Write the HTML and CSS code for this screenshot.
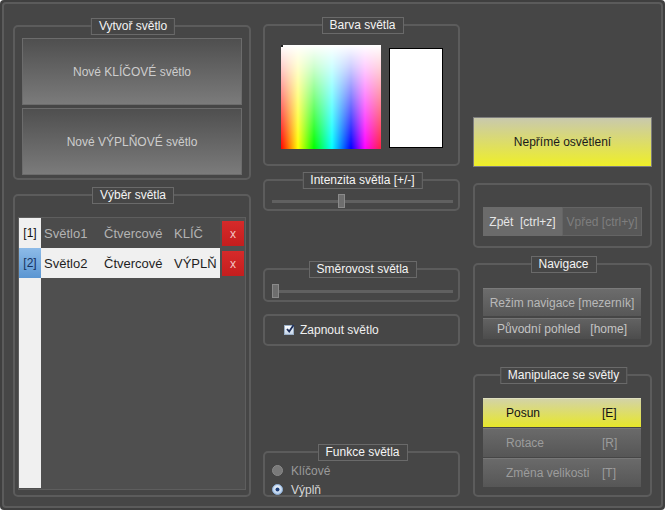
FILE: index.html
```html
<!DOCTYPE html>
<html lang="cs">
<head>
<meta charset="utf-8">
<title>Světla</title>
<link rel="stylesheet" href="styles.css">
</head>
<body>
<div class="window">
  <div class="frame">
    <div class="col col-left">
      <div class="group g-create">
        <div class="title">Vytvoř světlo</div>
        <div class="bigbtn">Nové KLÍČOVÉ světlo</div>
        <div class="bigbtn">Nové VÝPLŇOVÉ světlo</div>
      </div>
      <div class="group g-select">
        <div class="title">Výběr světla</div>
        <div class="table">
          <div class="hcol">
            <div class="hcell">[1]</div>
            <div class="hcell sel">[2]</div>
          </div>
          <div class="tbody">
            <div class="row">
              <div class="cells"><span class="c1">Světlo1</span><span class="c2">Čtvercové</span><span class="c3">KLÍČ</span></div>
              <div class="del"><span class="x">x</span></div>
            </div>
            <div class="row row-sel">
              <div class="cells"><span class="c1">Světlo2</span><span class="c2">Čtvercové</span><span class="c3">VÝPLŇ</span></div>
              <div class="del"><span class="x">x</span></div>
            </div>
          </div>
        </div>
      </div>
    </div>

    <div class="col col-mid">
      <div class="group g-color">
        <div class="title">Barva světla</div>
        <div class="spectrum"><span class="cursor"></span></div>
        <div class="swatch"></div>
      </div>
      <div class="group g-int">
        <div class="title">Intenzita světla [+/-]</div>
        <div class="slider"><span class="handle" style="margin-left:66px"></span></div>
      </div>
      <div class="group g-dir">
        <div class="title">Směrovost světla</div>
        <div class="slider"><span class="handle" style="margin-left:0px"></span></div>
      </div>
      <div class="group g-on">
        <span class="check"><svg width="10" height="10" viewBox="0 0 10 10"><path d="M2 5 L4.2 7.6 L8.6 1" fill="none" stroke="#1c2e5a" stroke-width="1.8"/></svg></span>
        <span class="on-label">Zapnout světlo</span>
      </div>
      <div class="group g-func">
        <div class="title">Funkce světla</div>
        <div class="radio dis">
          <svg width="11" height="11" viewBox="0 0 11 11"><circle cx="5.5" cy="5.5" r="5" fill="#7a7a7a" stroke="#8a8a8a" stroke-width="1"/></svg>
          <span>Klíčové</span>
        </div>
        <div class="radio on">
          <svg width="11" height="11" viewBox="0 0 11 11"><defs><radialGradient id="rg" cx="50%" cy="40%" r="60%"><stop offset="0" stop-color="#ffffff"/><stop offset="1" stop-color="#a9c6e8"/></radialGradient></defs><circle cx="5.5" cy="5.5" r="5" fill="url(#rg)" stroke="#8fb0d8" stroke-width="1"/><circle cx="5.5" cy="5.5" r="2" fill="#1d3f7a"/></svg>
          <span>Výplň</span>
        </div>
      </div>
    </div>

    <div class="col col-right">
      <div class="yellowbtn">Nepřímé osvětlení</div>
      <div class="group g-undo">
        <div class="undo-row">
          <div class="ubtn act">Zpět  [ctrl+z]</div>
          <div class="ubtn off">Vpřed [ctrl+y]</div>
        </div>
      </div>
      <div class="group g-nav">
        <div class="title">Navigace</div>
        <div class="navbtn n1">Režim navigace [mezerník]</div>
        <div class="navbtn n2">Původní pohled   [home]</div>
      </div>
      <div class="group g-man">
        <div class="title">Manipulace se světly</div>
        <div class="mbtn active"><span class="l">Posun</span><span class="k">[E]</span></div>
        <div class="mbtn"><span class="l">Rotace</span><span class="k">[R]</span></div>
        <div class="mbtn"><span class="l">Změna velikosti</span><span class="k">[T]</span></div>
      </div>
    </div>
  </div>
</div>
</body>
</html>
```

FILE: styles.css
```css
html, body {
  margin: 0;
  padding: 0;
  background: #ffffff;
}
body {
  font-family: "Liberation Sans", Arial, sans-serif;
  font-size: 12px;
}
.window {
  width: 665px;
  height: 510px;
  box-sizing: border-box;
  padding: 2px;
  background: #3f3f3f;
  border-radius: 4px;
}
.frame {
  width: 661px;
  height: 506px;
  box-sizing: border-box;
  border: 2px solid #5b5b5b;
  border-radius: 4px;
  background: #464646;
  display: flex;
  padding-left: 9px;
}
.col {
  display: flex;
  flex-direction: column;
}
.col-left { width: 238px; }
.col-mid { width: 197px; margin-left: 12px; }
.col-right { width: 179px; margin-left: 13px; }

.group {
  position: relative;
  box-sizing: border-box;
  border: 2px solid #5c5c5c;
  border-radius: 5px;
}
.title {
  position: absolute;
  top: -9px;
  left: 50%;
  transform: translateX(calc(-50% + 1px));
  height: 17px;
  box-sizing: border-box;
  border: 1px solid #6a6a6a;
  background: #464646;
  color: #f4f4f4;
  line-height: 15px;
  padding: 0 7px;
  white-space: nowrap;
}

/* left column */
.g-create {
  margin-top: 21px;
  height: 155px;
  padding: 11px 7px 0 7px;
  display: flex;
  flex-direction: column;
  gap: 3px;
}
.bigbtn {
  height: 67px;
  box-sizing: border-box;
  border: 1px solid #6c6c6c;
  background: linear-gradient(#4f4f4f, #7b7b7b);
  color: #cdcdcd;
  display: flex;
  align-items: center;
  justify-content: center;
}
.g-select {
  margin-top: 14px;
  height: 303px;
  padding: 21px 3px 0 3px;
}
.table {
  height: 273px;
  box-sizing: border-box;
  border: 1px solid #5e5e5e;
  background: #4f4f4f;
  display: flex;
}
.hcol {
  width: 22px;
  background: #f0f0f0;
  display: flex;
  flex-direction: column;
  margin-bottom: 1px;
}
.hcell {
  height: 30px;
  display: flex;
  align-items: center;
  justify-content: center;
  color: #111;
  font-size: 12px;
}
.hcell.sel {
  background: linear-gradient(#8dbbe8, #5b96d2);
  color: #14305e;
}
.tbody {
  flex: 1;
  display: flex;
  flex-direction: column;
}
.row {
  height: 30px;
  display: flex;
}
.cells {
  width: 179px;
  display: flex;
  align-items: center;
  font-size: 13px;
  color: #b3b3b3;
  background: #4b4b4b;
  white-space: nowrap;
}
.row-sel .cells {
  background: #f0f0f0;
  color: #1e1e1e;
}
.c1 { width: 63px; padding-left: 3px; box-sizing: border-box; }
.c2 { width: 70px; }
.c3 { width: 46px; }
.del {
  width: 25px;
  padding: 3px 0 2px 2px;
  box-sizing: border-box;
}
.x {
  display: flex;
  width: 22px;
  height: 25px;
  align-items: center;
  justify-content: center;
  background: linear-gradient(#d62a2a, #c41e1e);
  color: #f3c4c4;
  font-size: 12px;
}

/* middle column */
.g-color {
  margin-top: 20px;
  height: 142px;
  padding: 19px 0 0 16px;
  display: flex;
  align-items: flex-start;
}
.spectrum {
  position: relative;
  width: 100px;
  height: 104px;
  background:
    linear-gradient(to bottom, #ffffff 0%, rgba(255,255,255,0.8) 22%, rgba(255,255,255,0) 100%),
    linear-gradient(to right, #ff0000 0%, #ffff00 17%, #00ff00 33%, #00ffff 51%, #0000ff 70%, #ff00ff 84%, #ff2040 100%);
}
.cursor {
  position: absolute;
  left: 0;
  top: 0;
  width: 2px;
  height: 2px;
  background: #222;
}
.swatch {
  width: 54px;
  height: 100px;
  margin: 3px 0 0 8px;
  box-sizing: border-box;
  border: 1px solid #000;
  background: #fff;
}
.g-int {
  margin-top: 13px;
  height: 32px;
}
.slider {
  height: 14px;
  display: flex;
  background: linear-gradient(#606060, #606060) center / 100% 3px no-repeat;
}
.g-int .slider { margin: 13px 5px 0 7px; }
.g-dir .slider { margin: 14px 5px 0 7px; }
.handle {
  width: 7px;
  height: 14px;
  box-sizing: border-box;
  border: 1px solid #8a8a8a;
  background: #6e6e6e;
}
.g-dir {
  margin-top: 57px;
  height: 34px;
}
.g-on {
  margin-top: 12px;
  height: 32px;
  display: flex;
  align-items: center;
  padding-left: 19px;
  gap: 6px;
}
.check {
  width: 10px;
  height: 10px;
  box-sizing: border-box;
  border: 1px solid #9bb0c8;
  background: linear-gradient(#ffffff, #c6d6ea);
  display: flex;
  position: relative;
}
.check svg {
  position: absolute;
  left: 0;
  top: -2px;
}
.on-label {
  color: #f0f0f0;
}
.g-func {
  margin-top: 105px;
  height: 46px;
  padding: 8px 0 0 7px;
}
.radio {
  height: 19px;
  display: flex;
  align-items: center;
  gap: 8px;
}
.radio.dis span { color: #9a9a9a; }
.radio.on span { color: #d6d6d6; }

/* right column */
.yellowbtn {
  margin-top: 113px;
  height: 50px;
  box-sizing: border-box;
  border: 1px solid #7e7e7e;
  background: linear-gradient(#c9c9ad, #efef28);
  color: #1a1a1a;
  display: flex;
  align-items: center;
  justify-content: center;
}
.g-undo {
  margin-top: 16px;
  height: 65px;
  padding: 22px 0 0 8px;
}
.undo-row {
  display: flex;
  width: 159px;
}
.ubtn {
  height: 29px;
  box-sizing: border-box;
  display: flex;
  align-items: center;
  justify-content: center;
  white-space: pre;
  overflow: hidden;
}
.ubtn.act {
  width: 79px;
  background: #6b6b6b;
  color: #e6e6e6;
}
.ubtn.off {
  width: 80px;
  background: #585858;
  border: 1px solid #646464;
  color: #7e7e7e;
}
.g-nav {
  margin-top: 15px;
  height: 84px;
  padding: 23px 0 0 8px;
}
.navbtn {
  width: 158px;
  box-sizing: border-box;
  display: flex;
  align-items: center;
  justify-content: center;
  white-space: pre;
}
.navbtn.n1 {
  height: 28px;
  background: linear-gradient(#6c6c6c, #575757);
  border-top: 1px solid #7a7a7a;
  color: #b9b9b9;
}
.navbtn.n2 {
  height: 21px;
  margin-top: 2px;
  background: linear-gradient(#626262, #4c4c4c);
  border-top: 1px solid #737373;
  color: #c4c4c4;
}
.g-man {
  margin-top: 27px;
  height: 123px;
  padding: 22px 0 0 8px;
  display: flex;
  flex-direction: column;
  gap: 1px;
}
.mbtn {
  width: 158px;
  height: 29px;
  box-sizing: border-box;
  padding-left: 23px;
  display: flex;
  align-items: center;
  background: linear-gradient(#6a6a6a, #565656);
  border-top: 1px solid #777;
  color: #9c9c9c;
  white-space: nowrap;
}
.mbtn.active {
  background: linear-gradient(#d3d3a6, #e8e82a);
  border-top: 1px solid #e0e0c0;
  color: #111;
}
.mbtn .l {
  width: 96px;
}
```
